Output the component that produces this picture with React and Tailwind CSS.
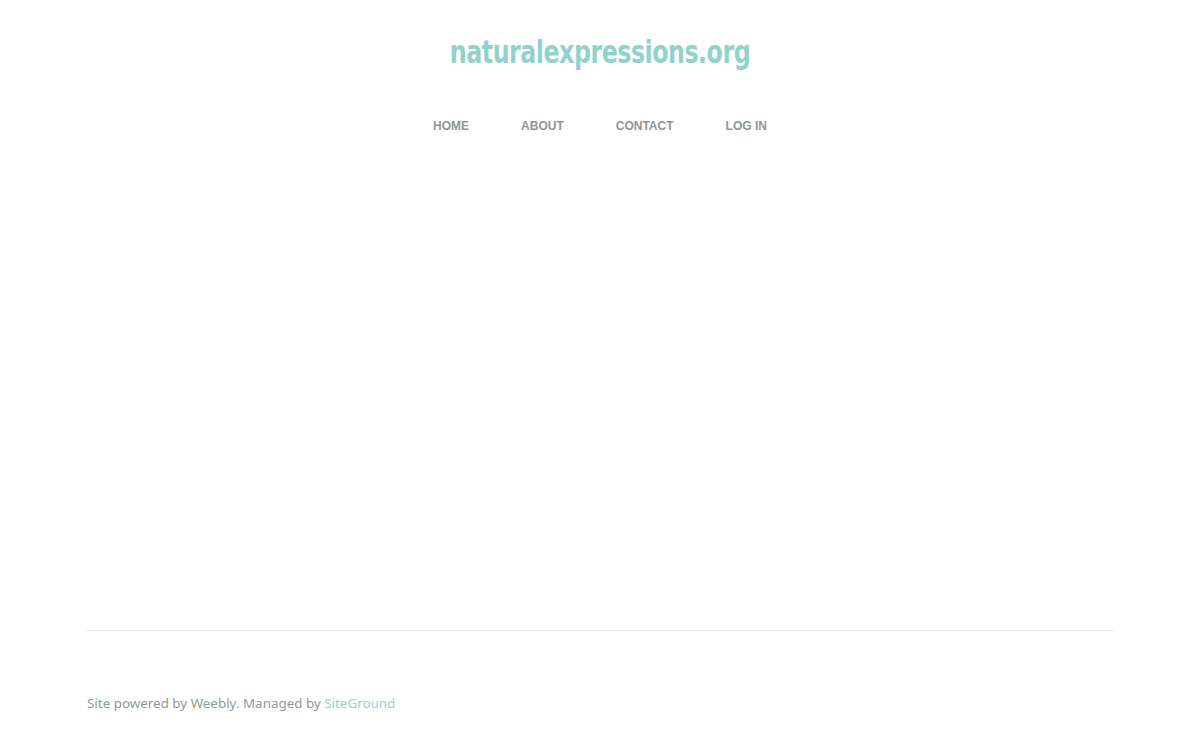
export default function App() {
  const links = ['HOME', 'ABOUT', 'CONTACT', 'LOG IN'];

  return (
    <div className="min-h-[740px] bg-white font-['Open_Sans',sans-serif]">
      <header className="flex flex-col items-center pt-[30px]">
        <a
          href="#"
          className="inline-block scale-x-[0.825] text-[32px] leading-[44px] font-bold tracking-[-0.6px] text-[#92d2cd] font-['DejaVu_Sans_Condensed',sans-serif]"
        >
          naturalexpressions.org
        </a>
        <nav className="mt-[44px] flex">
          {links.map((link) => (
            <a
              key={link}
              href="#"
              className="px-[26px] text-[12px] leading-[16px] font-bold text-[#8d9893] font-['Liberation_Sans',sans-serif]"
            >
              {link}
            </a>
          ))}
        </nav>
      </header>

      <main className="h-[496px]" />

      <footer className="mx-auto w-[1026px] border-t border-[#e2e2e2] pt-[62px]">
        <p className="text-[13.4px] leading-[20px] text-[#8d9994] font-['Noto_Sans',sans-serif]">
          Site powered by Weebly. Managed by{' '}
          <a href="#" className="text-[#92d2cd]">
            SiteGround
          </a>
        </p>
      </footer>
    </div>
  );
}
